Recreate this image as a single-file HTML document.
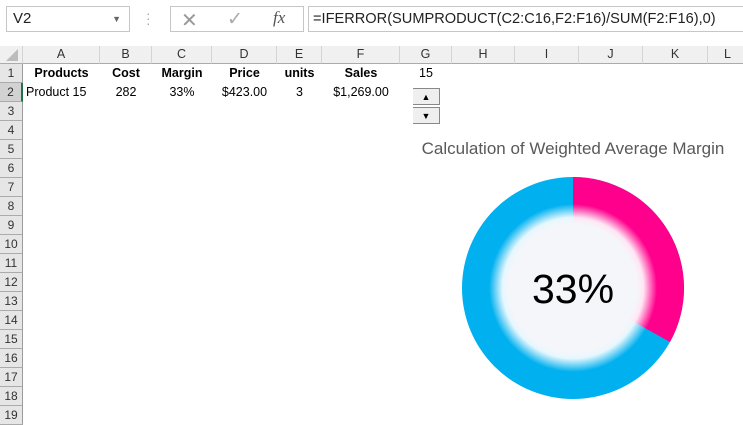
<!DOCTYPE html>
<html><head><style>
body{margin:0;width:743px;height:415px;overflow:hidden;background:#fff;font-family:"Liberation Sans",sans-serif;position:relative}
.a{position:absolute}
.top{left:0;top:0;width:743px;height:40px;background:#fff}
.nb{left:6px;top:6px;width:124px;height:26px;border:1px solid #c6c6c6;box-sizing:border-box;font-size:15px;line-height:24px;padding-left:6px;color:#222}
.fb{left:170px;top:6px;width:134px;height:26px;border:1px solid #c6c6c6;box-sizing:border-box}
.fx{left:308px;top:6px;width:440px;height:26px;border:1px solid #c6c6c6;border-right:none;box-sizing:border-box;font-size:14.6px;line-height:24px;padding-left:4px;color:#222;white-space:nowrap}
.hdr{top:46px;height:18px;background:#f0f0f0;border-bottom:1px solid #ababab;box-sizing:border-box;font-size:12.5px;text-align:center;line-height:17px;color:#333;border-right:1px solid #d4d4d4}
.rh{left:0;width:23px;height:19px;background:#e6e6e6;border-bottom:1px solid #ababab;border-right:1px solid #9b9b9b;box-sizing:border-box;font-size:12px;text-align:center;line-height:18px;color:#333}
.c{font-size:12.5px;height:19px;line-height:19px;text-align:center;color:#000}
</style></head><body>
<div class="a top"></div>
<div class="a nb">V2<span style="position:absolute;right:8px;top:0;font-size:9px;color:#666">▼</span></div>
<div class="a" style="left:146px;top:11px;color:#aaa;font-size:14px;line-height:5px">·<br>·<br>·</div>
<div class="a fb"><span class="a" style="left:10px;top:1px;font-size:20px;color:#999">✕</span><span class="a" style="left:56px;top:1px;font-size:19px;color:#aaa">✓</span><span class="a" style="left:102px;top:1px;font-size:17px;font-style:italic;font-family:'Liberation Serif',serif;color:#555">fx</span></div>
<div class="a fx">=IFERROR(SUMPRODUCT(C2:C16,F2:F16)/SUM(F2:F16),0)</div>
<div class="a" style="left:0;top:40px;width:743px;height:6px;background:#fff"></div>
<div class="a hdr" style="left:0;width:23px;background:#f0f0f0"><svg width="18" height="15"><polygon points="16,3 16,15 4,15" fill="#bcbcbc"/></svg></div>
<div class="a hdr" style="left:23px;width:77px">A</div>
<div class="a hdr" style="left:100px;width:52px">B</div>
<div class="a hdr" style="left:152px;width:60px">C</div>
<div class="a hdr" style="left:212px;width:65px">D</div>
<div class="a hdr" style="left:277px;width:45px">E</div>
<div class="a hdr" style="left:322px;width:78px">F</div>
<div class="a hdr" style="left:400px;width:52px">G</div>
<div class="a hdr" style="left:452px;width:63px">H</div>
<div class="a hdr" style="left:515px;width:64px">I</div>
<div class="a hdr" style="left:579px;width:64px">J</div>
<div class="a hdr" style="left:643px;width:65px">K</div>
<div class="a hdr" style="left:708px;width:40px">L</div>
<div class="a rh" style="top:64px">1</div>
<div class="a rh" style="top:83px;background:#d2d2d2;border-right:2px solid #217346">2</div>
<div class="a rh" style="top:102px">3</div><div class="a rh" style="top:121px">4</div>
<div class="a rh" style="top:140px">5</div><div class="a rh" style="top:159px">6</div>
<div class="a rh" style="top:178px">7</div><div class="a rh" style="top:197px">8</div>
<div class="a rh" style="top:216px">9</div><div class="a rh" style="top:235px">10</div>
<div class="a rh" style="top:254px">11</div><div class="a rh" style="top:273px">12</div>
<div class="a rh" style="top:292px">13</div><div class="a rh" style="top:311px">14</div>
<div class="a rh" style="top:330px">15</div><div class="a rh" style="top:349px">16</div>
<div class="a rh" style="top:368px">17</div><div class="a rh" style="top:387px">18</div>
<div class="a rh" style="top:406px">19</div>
<div class="a c" style="left:23px;top:64px;width:77px;font-weight:bold">Products</div>
<div class="a c" style="left:100px;top:64px;width:52px;font-weight:bold">Cost</div>
<div class="a c" style="left:152px;top:64px;width:60px;font-weight:bold">Margin</div>
<div class="a c" style="left:212px;top:64px;width:65px;font-weight:bold">Price</div>
<div class="a c" style="left:277px;top:64px;width:45px;font-weight:bold">units</div>
<div class="a c" style="left:322px;top:64px;width:78px;font-weight:bold">Sales</div>
<div class="a c" style="left:400px;top:64px;width:52px">15</div>
<div class="a c" style="left:26px;top:83px;text-align:left">Product 15</div>
<div class="a c" style="left:100px;top:83px;width:52px">282</div>
<div class="a c" style="left:152px;top:83px;width:60px">33%</div>
<div class="a c" style="left:212px;top:83px;width:65px">$423.00</div>
<div class="a c" style="left:277px;top:83px;width:45px">3</div>
<div class="a c" style="left:322px;top:83px;width:78px">$1,269.00</div>
<div class="a" style="left:413px;top:88px;width:27px;height:17px;background:#efefef;border:1px solid #888;border-left:none;box-sizing:border-box;text-align:center;font-size:9px;line-height:16px">▲</div>
<div class="a" style="left:413px;top:107px;width:27px;height:17px;background:#efefef;border:1px solid #888;border-left:none;box-sizing:border-box;text-align:center;font-size:9px;line-height:16px">▼</div>
<div class="a" style="left:400px;top:139px;width:346px;text-align:center;font-size:17px;color:#595959">Calculation of Weighted Average Margin</div>
<svg class="a" style="left:0;top:0" width="743" height="415">
<defs><radialGradient id="g" cx="573" cy="288" r="84" gradientUnits="userSpaceOnUse">
<stop offset="0" stop-color="#f5f6fa"/><stop offset="0.76" stop-color="#f5f6fa"/><stop offset="0.84" stop-color="#fff" stop-opacity="0.9"/><stop offset="1" stop-color="#fff" stop-opacity="0"/></radialGradient></defs>
<circle cx="573" cy="288" r="111" fill="#00b0ef"/>
<path d="M573,288 L573,177 A111,111 0 0 1 670,342 Z" fill="#ff008c"/>
<circle cx="573" cy="288" r="84" fill="url(#g)"/>
<text x="573" y="303" text-anchor="middle" font-family="Liberation Sans,sans-serif" font-size="41" fill="#000">33%</text>
</svg>
</body></html>
